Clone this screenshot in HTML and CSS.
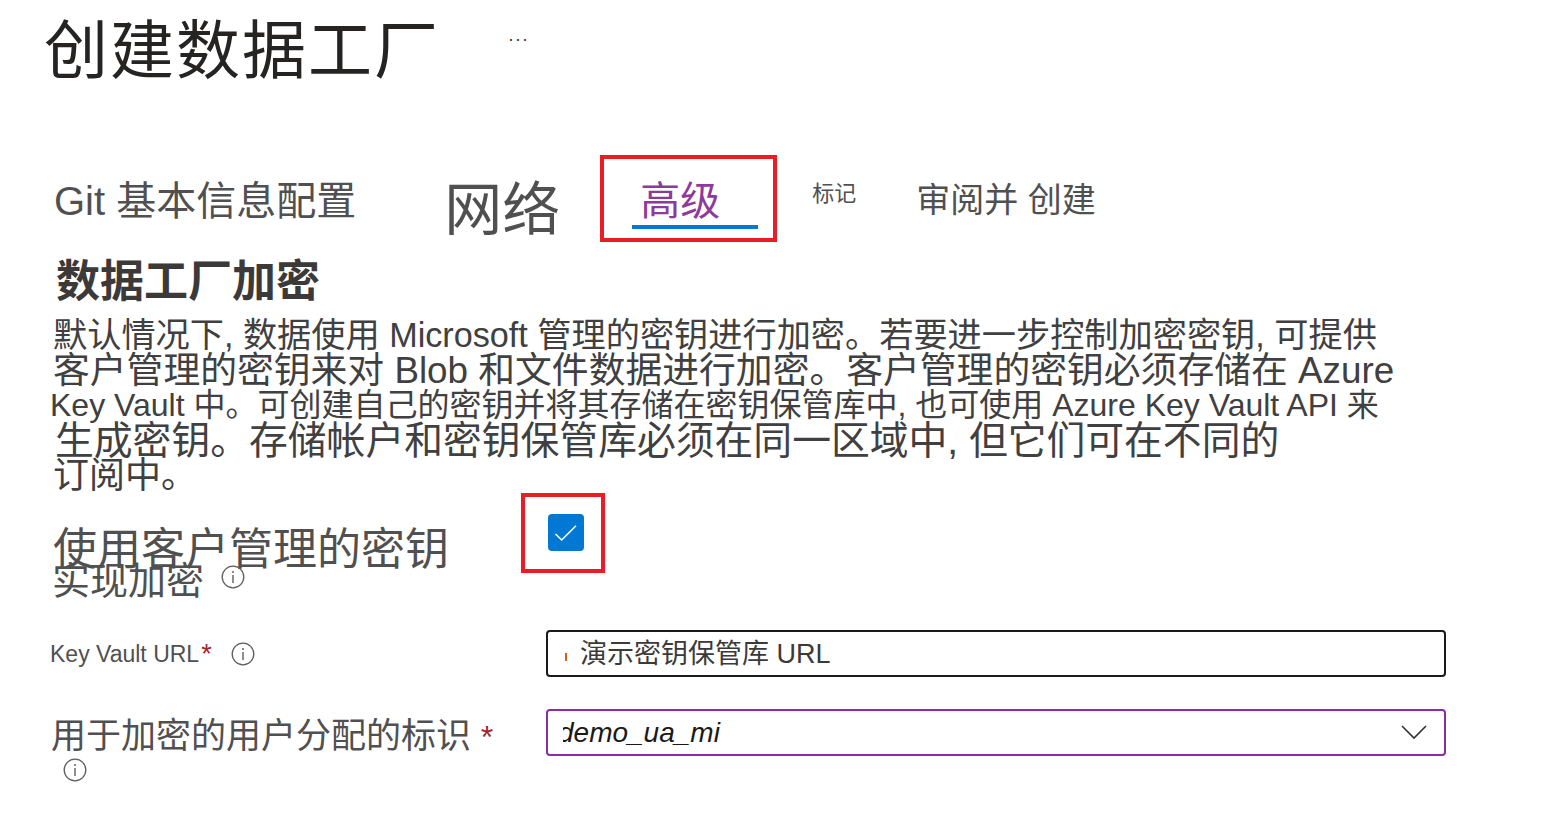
FILE: index.html
```html
<!DOCTYPE html>
<html lang="zh-CN">
<head>
<meta charset="utf-8">
<title>创建数据工厂</title>
<link rel="stylesheet" href="styles.css">
</head>
<body>
<div class="page">
  <div class="title-row">
    <h1 class="title">创建数据工厂</h1>
    <span class="more">···</span>
  </div>

  <nav class="tabs">
    <span class="tab tab-basics">Git 基本信息配置</span>
    <span class="tab tab-network">网络</span>
    <span class="tab-highlight">
      <span class="tab-active">高级</span>
      <span class="tab-underline"></span>
    </span>
    <span class="tab tab-tags">标记</span>
    <span class="tab tab-review">审阅并 创建</span>
  </nav>

  <h2 class="section-title">数据工厂加密</h2>

  <p class="desc">
    <span class="line l1">默认情况下, 数据使用 Microsoft 管理的密钥进行加密。若要进一步控制加密密钥, 可提供</span>
    <span class="line l2">客户管理的密钥来对 Blob 和文件数据进行加密。客户管理的密钥必须存储在 Azure</span>
    <span class="line l3">Key Vault 中。可创建自己的密钥并将其存储在密钥保管库中, 也可使用 Azure Key Vault API 来</span>
    <span class="line l4">生成密钥。存储帐户和密钥保管库必须在同一区域中, 但它们可在不同的</span>
    <span class="line l5">订阅中。</span>
  </p>

  <div class="cmk-row">
    <div class="cmk-label">
      <span class="cmk-l1">使用客户管理的密钥</span>
      <span class="cmk-l2">实现加密<svg class="info info-cmk" viewBox="0 0 24 24" width="24" height="24"><circle cx="12" cy="12" r="10.8" fill="none" stroke="#605e5c" stroke-width="1.3"/><rect x="11.3" y="10" width="1.4" height="8" fill="#605e5c"/><circle cx="12" cy="7" r="1" fill="#605e5c"/></svg></span>
    </div>
    <div class="check-highlight">
      <span class="checkbox"><svg viewBox="0 0 36 36" width="36" height="36"><polyline points="7.5,20 13.7,26 28,11.7" fill="none" stroke="#fff" stroke-width="1.6"/></svg></span>
    </div>
  </div>

  <div class="field-row field-kv">
    <label class="field-label kv-label">Key Vault URL<span class="req">*</span><svg class="info info-kv" viewBox="0 0 24 24" width="24" height="24"><circle cx="12" cy="12" r="10.8" fill="none" stroke="#605e5c" stroke-width="1.3"/><rect x="11.3" y="10" width="1.4" height="8" fill="#605e5c"/><circle cx="12" cy="7" r="1" fill="#605e5c"/></svg></label>
    <div class="input"><span class="caret-mark"></span><span class="input-text">演示密钥保管库 URL</span></div>
  </div>

  <div class="field-row field-id">
    <div class="field-label id-label">
      <span class="id-text">用于加密的用户分配的标识 <span class="req">*</span></span>
      <svg class="info info-id" viewBox="0 0 24 24" width="24" height="24"><circle cx="12" cy="12" r="10.8" fill="none" stroke="#605e5c" stroke-width="1.3"/><rect x="11.3" y="10" width="1.4" height="8" fill="#605e5c"/><circle cx="12" cy="7" r="1" fill="#605e5c"/></svg>
    </div>
    <div class="select">
      <span class="select-clip"><span class="select-text">demo_ua_mi</span></span>
      <svg class="chevron" viewBox="0 0 26 15" width="26" height="15"><polyline points="1,1 13,13 25,1" fill="none" stroke="#323130" stroke-width="1.6"/></svg>
    </div>
  </div>
</div>
</body>
</html>
```

FILE: styles.css
```css
* { box-sizing: border-box; }
html, body { margin: 0; padding: 0; background: #fff; }
body {
  font-family: "Liberation Sans", "Noto Sans CJK SC", sans-serif;
  color: #484644;
}
.page { padding: 0 0 0 50px; width: 1541px; height: 827px; overflow: hidden; }

.title-row { display: flex; align-items: flex-start; margin-top: 19px; }
.title {
  margin: 0 0 0 -6px;
  font-size: 64px; line-height: 64px; font-weight: 400;
  color: #252423; letter-spacing: 2px;
}
.more { margin: 10px 0 0 68px; font-size: 18px; color: #323130; letter-spacing: 1px; }

.tabs { display: flex; align-items: flex-start; margin-top: 72px; }
.tab { display: block; }
.tab-basics { font-size: 40px; line-height: 40px; padding-top: 26px; margin-left: 4px; color: #505050; }
.tab-network { font-size: 58px; line-height: 58px; padding-top: 26px; margin-left: 88px; color: #505050; }
.tab-highlight {
  display: flex; flex-direction: column; align-items: flex-start;
  width: 177px; height: 87px; margin-left: 40px;
  border: 4px solid #ec1c24; padding-top: 22px;
}
.tab-active { font-size: 40px; line-height: 40px; margin-left: 36px; color: #8e3a9c; }
.tab-underline { display: block; width: 126px; height: 4px; margin: 4px 0 0 28px; background: #0078d4; }
.tab-tags { font-size: 22px; line-height: 22px; padding-top: 28px; margin-left: 35px; color: #505050; }
.tab-review { font-size: 34px; line-height: 34px; padding-top: 28px; margin-left: 60px; color: #505050; }

.section-title {
  margin: 18px 0 0 6px;
  font-size: 44px; line-height: 44px; font-weight: 700; color: #3b3a39;
}

.desc { margin: 14px 0 0 0; }
.line { display: block; height: 35px; line-height: 35px; white-space: nowrap; color: #404040; }
.l1 { font-size: 34.2px; margin-left: 3px; }
.l2 { font-size: 36.8px; margin-left: 3px; }
.l3 { font-size: 32px; margin-left: 0; }
.l4 { font-size: 38.8px; margin-left: 5px; }
.l5 { font-size: 36px; margin-left: 3px; }

.cmk-row { display: flex; align-items: flex-start; }
.cmk-label { width: 471px; padding-top: 35px; display: flex; flex-direction: column; }
.cmk-l1 { font-size: 44px; line-height: 44px; margin-left: 3px; color: #505050; white-space: nowrap; }
.cmk-l2 { display: flex; align-items: flex-start; font-size: 38px; line-height: 38px; margin-top: -10px; margin-left: 2px; color: #505050; }
.info { display: block; flex: none; }
.info-cmk { margin: 3px 0 0 17px; }
.check-highlight {
  width: 84px; height: 80px; border: 4px solid #ec1c24;
  padding: 17px 0 0 23px;
}
.checkbox { display: block; width: 36px; height: 37px; border-radius: 4px; background: #0078d4; }
.checkbox svg { display: block; }

.field-row { display: flex; }
.field-kv { margin-top: 30px; align-items: center; }
.field-id { margin-top: 32px; align-items: flex-start; }
.field-label { width: 496px; flex: none; }
.kv-label { display: flex; align-items: center; font-size: 23px; line-height: 24px; color: #505050; }
.req { color: #a4262c; }
.kv-label .req { font-size: 27px; margin-left: 2px; }
.info-kv { margin-left: 19px; }
.id-label { padding-top: 10px; margin-left: 0; }
.id-text { display: block; font-size: 35px; line-height: 34px; margin-left: 1px; color: #505050; white-space: nowrap; }
.id-text .req { font-size: 32px; margin-left: 0; }
.info-id { margin: 4px 0 0 13px; }

.input {
  display: flex; align-items: center;
  width: 900px; height: 47px;
  border: 2px solid #1b1a19; border-radius: 4px;
  padding-left: 17px;
}
.caret-mark { display: block; width: 2px; height: 8px; margin-top: 6px; background: #c8641e; }
.input-text { font-size: 27px; line-height: 30px; margin-left: 13px; color: #3b3a39; }

.select {
  display: flex; align-items: center; justify-content: space-between;
  width: 900px; height: 47px;
  border: 2px solid #8a2da5; border-radius: 4px;
  padding: 0 17px 0 15px;
}
.select-clip { display: block; overflow: hidden; }
.select-text { display: block; margin-left: -5px; padding-right: 2px; font-size: 28px; line-height: 34px; font-style: italic; color: #1b1a19; }
.chevron { display: block; }
```
